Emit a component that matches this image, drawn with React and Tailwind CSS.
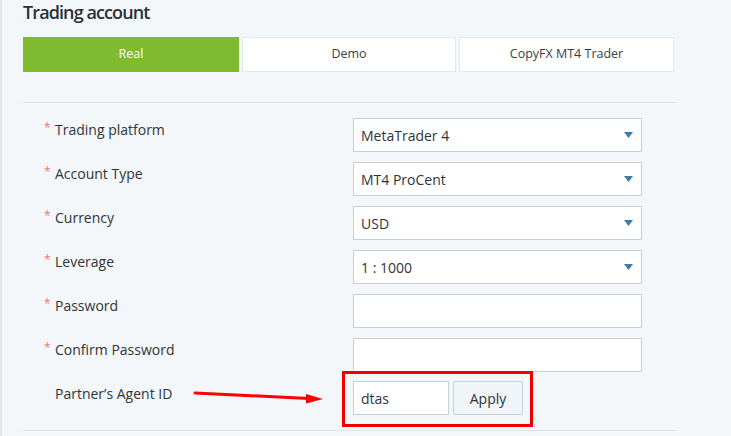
import React from "react";

const fields = [
  { label: "Trading platform", value: "MetaTrader 4", select: true },
  { label: "Account Type", value: "MT4 ProCent", select: true },
  { label: "Currency", value: "USD", select: true },
  { label: "Leverage", value: "1 : 1000", select: true },
  { label: "Password", value: "", select: false },
  { label: "Confirm Password", value: "", select: false },
];

const Caret = () => (
  <svg width="9" height="6" viewBox="0 0 9 6" className="shrink-0">
    <path d="M0 0 H9 L4.5 6 Z" fill="#3a7ea8" />
  </svg>
);

const FieldRow = ({ field }) => (
  <div className="flex items-start">
    <div className="w-[330px] pl-[21px] pt-[3px] flex items-start text-[14px] leading-[18px] text-[#2f3439]">
      <span className="w-[11px] text-[#f27474] text-[12px] leading-[14px]">*</span>
      <span>{field.label}</span>
    </div>
    <div className="w-[289px] h-[34px] bg-white border border-[#c8cfd6] flex items-center justify-between pl-[7px] pr-[8px] text-[14px] text-[#2f3439]">
      <span>{field.value}</span>
      {field.select && <Caret />}
    </div>
  </div>
);

export default function App() {
  return (
    <div
      className="w-[731px] h-[436px] overflow-hidden bg-[#f4f7fa] border-l-2 border-[#e1e6eb]"
      style={{ fontFamily: '"Open Sans", "Noto Sans", Arial, sans-serif' }}
    >
      <div className="pl-[21px] w-[674px]">
        <h1 className="text-[18px] leading-[24px] font-semibold text-[#2b3035] tracking-[-0.9px] pt-0">
          Trading account
        </h1>

        <div className="mt-[13px] grid grid-cols-[216px_214px_215px] gap-[3px] h-[35px] text-[12.5px]">
          <div className="bg-[#80ba31] text-white flex items-center justify-center">Real</div>
          <div className="bg-white border border-[#e4e7ea] text-[#3a3f44] flex items-center justify-center">
            Demo
          </div>
          <div className="bg-white border border-[#e4e7ea] text-[#3a3f44] flex items-center justify-center">
            CopyFX MT4 Trader
          </div>
        </div>

        <div className="mt-[30px] border-t border-[#dde2e7]" />

        <div className="pt-[15px] flex flex-col gap-[10px]">
          {fields.map((f) => (
            <FieldRow key={f.label} field={f} />
          ))}
        </div>

        <div className="relative flex items-start">
          <div className="w-[319px] pl-[32px] pt-[13px] text-[14px] leading-[18px] text-[#2f3439]">
            Partner’s Agent ID
          </div>
          <div className="border-[3px] border-[#f00000] pl-[8px] pr-[7px] pt-[7px] pb-[9px] flex gap-[4px] -mt-[1px]">
            <div className="w-[96px] h-[34px] bg-white border border-[#c8cfd6] flex items-center pl-[7px] text-[14px] text-[#2f3439]">
              dtas
            </div>
            <button className="w-[70px] h-[34px] bg-[#f2f5f8] border border-[#c8cfd6] rounded-[2px] text-[14px] text-[#2f3439]">
              Apply
            </button>
          </div>
          <svg
            className="absolute left-[170px] top-[17px]"
            width="132"
            height="16"
            viewBox="0 0 132 16"
          >
            <path d="M2 4 L116 9.5" stroke="#ff0000" strokeWidth="3" strokeLinecap="round" />
            <path d="M113 5 L130 10 L113 14.5 Z" fill="#ff0000" />
          </svg>
        </div>

        <div className="mt-[3px] border-t border-[#dde2e7]" />
      </div>
    </div>
  );
}
